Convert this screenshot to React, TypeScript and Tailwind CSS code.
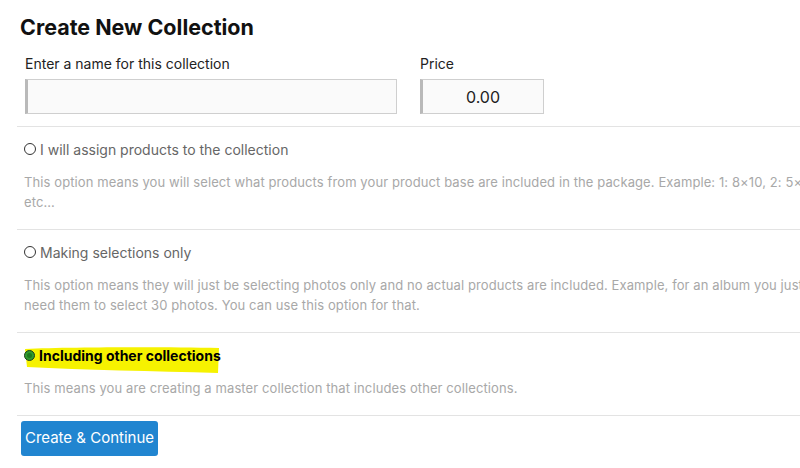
import React from 'react';

interface OptionProps {
  label: string;
  description: string;
  checked?: boolean;
}

function Radio({ checked }: { checked?: boolean }) {
  if (checked) {
    return (
      <span className="relative z-10 inline-flex h-[11px] w-[11px] shrink-0 items-center justify-center rounded-full border border-[#1d3d1d] bg-[#2f9a2f]">
        <span className="h-[5px] w-[5px] rounded-full bg-[#1f7a1f]" />
      </span>
    );
  }
  return <span className="inline-block h-[12px] w-[12px] shrink-0 rounded-full border border-[#333] bg-white" />;
}

function CollectionOption({ label, description, checked }: OptionProps) {
  return (
    <div className="border-t border-[#e3e3e3] pl-[7px] pt-[12px] pb-[17px]">
      <label className="relative flex h-[20px] items-center gap-[4px]">
        {checked && (
          // marker highlight drawn over the label
          <svg
            className="absolute left-[0px] top-[1px]"
            width="196"
            height="28"
            viewBox="0 0 196 28"
          >
            <path d="M1 3 C50 1 140 1 195 2 L194 27 C130 25 60 24 3 21 Z" fill="#f6f200" />
          </svg>
        )}
        <Radio checked={checked} />
        <span
          className={
            checked
              ? 'relative text-[14px] font-bold text-black'
              : 'text-[14px] text-[#666]'
          }
        >
          {label}
        </span>
      </label>
      <p className="mt-[13px] text-[13px] leading-[20px] tracking-[0.1px] text-[#a8a8a8]">{description}</p>
    </div>
  );
}

export default function App() {
  return (
    <div
      className="h-[468px] w-[800px] overflow-hidden bg-white"
      style={{ fontFamily: 'Inter, "Noto Sans", sans-serif' }}
    >
      <div className="w-[815px] pl-[17px] pt-[12px]">
        <h1 className="pl-[3px] text-[21.5px] font-bold leading-[30px] text-[#111]">Create New Collection</h1>

        <div className="mt-[12px] flex gap-[23px] pl-[8px]">
          <div className="flex w-[372px] flex-col">
            <span className="text-[14px] leading-[20px] text-[#222]">Enter a name for this collection</span>
            <input
              type="text"
              className="mt-[5px] h-[35px] border border-l-[3px] border-[#cfcfcf] border-l-[#b9b9b9] bg-[#fafafa] px-2 outline-none"
            />
          </div>
          <div className="flex w-[124px] flex-col">
            <span className="text-[14px] leading-[20px] text-[#222]">Price</span>
            <input
              type="text"
              defaultValue="0.00"
              className="mt-[5px] h-[35px] border border-l-[3px] border-[#cfcfcf] border-l-[#b9b9b9] bg-[#fafafa] px-2 text-center text-[16px] text-[#222] outline-none"
            />
          </div>
        </div>

        <div className="mt-[12px]">
          <CollectionOption
            label="I will assign products to the collection"
            description="This option means you will select what products from your product base are included in the package. Example: 1: 8×10, 2: 5×7 etc..."
          />
          <CollectionOption
            label="Making selections only"
            description="This option means they will just be selecting photos only and no actual products are included. Example, for an album you just need them to select 30 photos. You can use this option for that."
          />
          <CollectionOption
            checked
            label="Including other collections"
            description="This means you are creating a master collection that includes other collections."
          />
          <div className="border-t border-[#e3e3e3] pt-[5px] pl-[4px]">
            <button className="h-[35px] w-[137px] rounded-[3px] bg-[#2185d0] text-[15px] text-white">
              Create &amp; Continue
            </button>
          </div>
        </div>
      </div>
    </div>
  );
}
